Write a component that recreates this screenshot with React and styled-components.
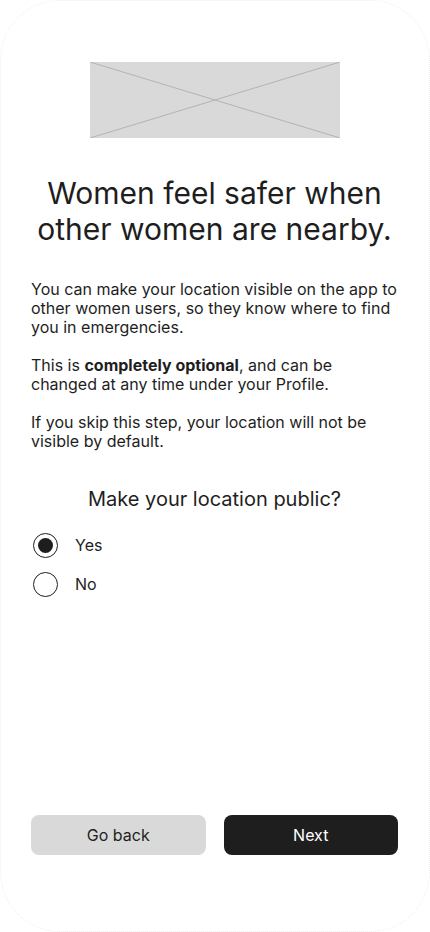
import { useState } from 'react';
import styled, { createGlobalStyle } from 'styled-components';

const GlobalStyle = createGlobalStyle`
  html, body {
    margin: 0;
    padding: 0;
    background: #ffffff;
  }
  body {
    font-family: Inter, "Noto Sans", sans-serif;
    color: #1e1e1e;
  }
  * {
    box-sizing: border-box;
  }
`;

const Frame = styled.div`
  width: 430px;
  height: 932px;
  border: 1px dotted #efefef;
  border-radius: 60px;
  display: flex;
  flex-direction: column;
  padding: 61px 31px 76px 30px;
`;

const Placeholder = styled.div`
  align-self: center;
  width: 250px;
  height: 76px;
  background: #d9d9d9;
  display: flex;
`;

const Title = styled.h1`
  margin: 37px 0 0;
  font-size: 30px;
  line-height: 36px;
  font-weight: 400;
  text-align: center;
`;

const Copy = styled.div`
  margin-top: 33px;
  font-size: 16px;
  line-height: 19px;
`;

const Paragraph = styled.p`
  margin: 0 0 19px;
  &:last-child {
    margin-bottom: 0;
  }
`;

const Question = styled.h2`
  margin: 36px 0 0;
  font-size: 20px;
  line-height: 24px;
  font-weight: 400;
  text-align: center;
`;

const Options = styled.div`
  margin-top: 22px;
  display: flex;
  flex-direction: column;
  gap: 14px;
`;

const Option = styled.label`
  display: flex;
  align-items: center;
  gap: 17px;
  font-size: 16px;
  line-height: 25px;
  cursor: pointer;
  padding-left: 2px;
`;

const Radio = styled.span`
  width: 25px;
  height: 25px;
  border-radius: 50%;
  border: 1.5px solid #1e1e1e;
  display: flex;
  align-items: center;
  justify-content: center;

  &::after {
    content: '';
    width: 15px;
    height: 15px;
    border-radius: 50%;
    background: ${({ $checked }) => ($checked ? '#1e1e1e' : 'transparent')};
  }
`;

const Actions = styled.div`
  margin-top: auto;
  display: grid;
  grid-template-columns: 1fr 1fr;
  gap: 18px;
`;

const Button = styled.button`
  height: 40px;
  border: none;
  border-radius: 8px;
  font-family: Inter, "Noto Sans", sans-serif;
  font-size: 16px;
  background: ${({ $primary }) => ($primary ? '#1e1e1e' : '#d9d9d9')};
  color: ${({ $primary }) => ($primary ? '#ffffff' : '#1e1e1e')};
  cursor: pointer;
`;

export default function App() {
  const [isPublic, setIsPublic] = useState(true);

  return (
    <>
      <GlobalStyle />
      <Frame>
        <Placeholder>
          <svg width="250" height="76" viewBox="0 0 250 76">
            <line x1="0" y1="0" x2="250" y2="76" stroke="#b3b3b3" strokeWidth="1" />
            <line x1="250" y1="0" x2="0" y2="76" stroke="#b3b3b3" strokeWidth="1" />
          </svg>
        </Placeholder>
        <Title>Women feel safer when other women are nearby.</Title>
        <Copy>
          <Paragraph>
            You can make your location visible on the app to other women users,
            so they know where to find you in emergencies.
          </Paragraph>
          <Paragraph>
            This is <b>completely optional</b>, and can be changed at any time
            under your Profile.
          </Paragraph>
          <Paragraph>
            If you skip this step, your location will not be visible by default.
          </Paragraph>
        </Copy>
        <Question>Make your location public?</Question>
        <Options>
          <Option onClick={() => setIsPublic(true)}>
            <Radio $checked={isPublic} />
            Yes
          </Option>
          <Option onClick={() => setIsPublic(false)}>
            <Radio $checked={!isPublic} />
            No
          </Option>
        </Options>
        <Actions>
          <Button>Go back</Button>
          <Button $primary>Next</Button>
        </Actions>
      </Frame>
    </>
  );
}
